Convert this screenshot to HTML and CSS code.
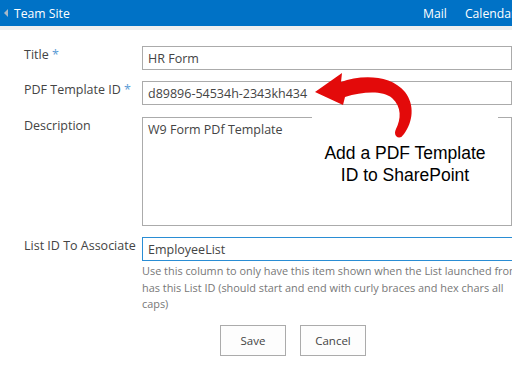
FILE: index.html
```html
<!DOCTYPE html>
<html lang="en">
<head>
    <meta charset="UTF-8">
    <title>PDF Template - New Item</title>
    <link rel="stylesheet" href="styles.css">
</head>
<body>

    <div class="suite-bar">
        <a class="site-link" href="#"><span class="back-tri"></span>Team Site</a>
        <nav class="suite-links">
            <a href="#">Mail</a>
            <a href="#">Calendar</a>
        </nav>
    </div>
    <div class="ribbon-strip"></div>

    <form class="item-form">
        <div class="form-row">
            <label>Title <span class="req">*</span></label>
            <input class="field" type="text" value="HR Form">
        </div>
        <div class="form-row">
            <label>PDF Template ID <span class="req">*</span></label>
            <input class="field" type="text" value="d89896-54534h-2343kh434">
        </div>
        <div class="form-row row-area">
            <label>Description</label>
            <textarea class="field field-area">W9 Form PDf Template</textarea>
        </div>
        <div class="form-row">
            <label>List ID To Associate</label>
            <div class="field-group">
                <input class="field focused" type="text" value="EmployeeList">
                <p class="help">Use this column to only have this item shown when the List launched from<br>has this List ID (should start and end with curly braces and hex chars all<br>caps)</p>
            </div>
        </div>
        <div class="form-actions">
            <button type="button" class="btn">Save</button>
            <button type="button" class="btn">Cancel</button>
        </div>
    </form>

    <!-- annotation laid over the form -->
    <div class="callout">Add a PDF Template<br>ID to SharePoint</div>
    <svg class="callout-arrow" width="512" height="384" viewBox="0 0 512 384">
        <path d="M315,92 L342,73 L341,82 C360,75 390,74 405,92 C415,105 413,122 404,134 Q400,140 396,136 Q394,133 396,129 C401,119 402,107 392,98 C382,90 362,92 345,97 L343,105 Z"></path>
    </svg>

</body>
</html>
```

FILE: styles.css
```css
:root {
    --azul: #0072c6;
    --texto: #444444;
    --texto-fraco: #777777;
    --borda: #ababab;
    --foco: #2a8dd4;
}

body {
    margin: 0;
    width: 512px;
    height: 384px;
    overflow: hidden;
    position: relative;
    background: #ffffff;
    font-family: 'Open Sans', 'Noto Sans', sans-serif;
    color: var(--texto);
}

.suite-bar {
    height: 26px;
    background-color: var(--azul);
    display: flex;
    align-items: center;
    justify-content: space-between;
    white-space: nowrap;
}

.site-link {
    display: flex;
    align-items: center;
    color: #ffffff;
    text-decoration: none;
    font-size: 12.2px;
    padding-left: 4px;
}

.back-tri {
    width: 0;
    height: 0;
    border-top: 4px solid transparent;
    border-bottom: 4px solid transparent;
    border-right: 4px solid #a8b8c8;
    margin-right: 6px;
}

.suite-links { display: flex; gap: 18px; width: 89px; flex: none; }
.suite-links a { color: #ffffff; text-decoration: none; font-size: 12.2px; }

.ribbon-strip { height: 4px; background-color: #f0f0f0; }

.item-form {
    padding: 16px 0 0 24px;
    display: flex;
    flex-direction: column;
    gap: 11px;
}

.form-row { display: flex; align-items: flex-start; }
.row-area { margin-top: 1px; }

.form-row label {
    width: 118px;
    flex: none;
    font-size: 12.5px;
    line-height: 18px;
    padding-top: 0;
}

.req { color: #5a9bd5; }

.field {
    box-sizing: border-box;
    width: 420px;
    height: 24px;
    margin: 0;
    padding: 0 5px;
    border: 1px solid var(--borda);
    font-family: inherit;
    font-size: 12.5px;
    color: var(--texto);
    background: #ffffff;
    outline: none;
}

.field-area {
    height: 109px;
    padding: 3px 5px;
    resize: none;
    line-height: 18px;
}

.field.focused { border-color: var(--foco); }

.field-group { display: flex; flex-direction: column; }

.help {
    margin: 2px 0 0;
    font-size: 10.9px;
    line-height: 16.7px;
    color: var(--texto-fraco);
    white-space: nowrap;
}

.form-actions { display: flex; gap: 14px; padding-left: 196px; margin-top: 1px; }

.btn {
    width: 66px;
    height: 31px;
    background: #fdfdfd;
    border: 1px solid var(--borda);
    font-family: inherit;
    font-size: 11.5px;
    color: var(--texto);
    padding: 0;
}

.callout {
    position: absolute;
    left: 312px;
    top: 110px;
    width: 186px;
    height: 85px;
    box-sizing: border-box;
    padding-top: 32px;
    background: #ffffff;
    text-align: center;
    font-family: 'Liberation Sans', Arial, sans-serif;
    font-size: 17.5px;
    line-height: 22px;
    color: #000000;
}

.callout-arrow { position: absolute; left: 0; top: 0; pointer-events: none; }
.callout-arrow path { fill: #e30a0a; }
```
